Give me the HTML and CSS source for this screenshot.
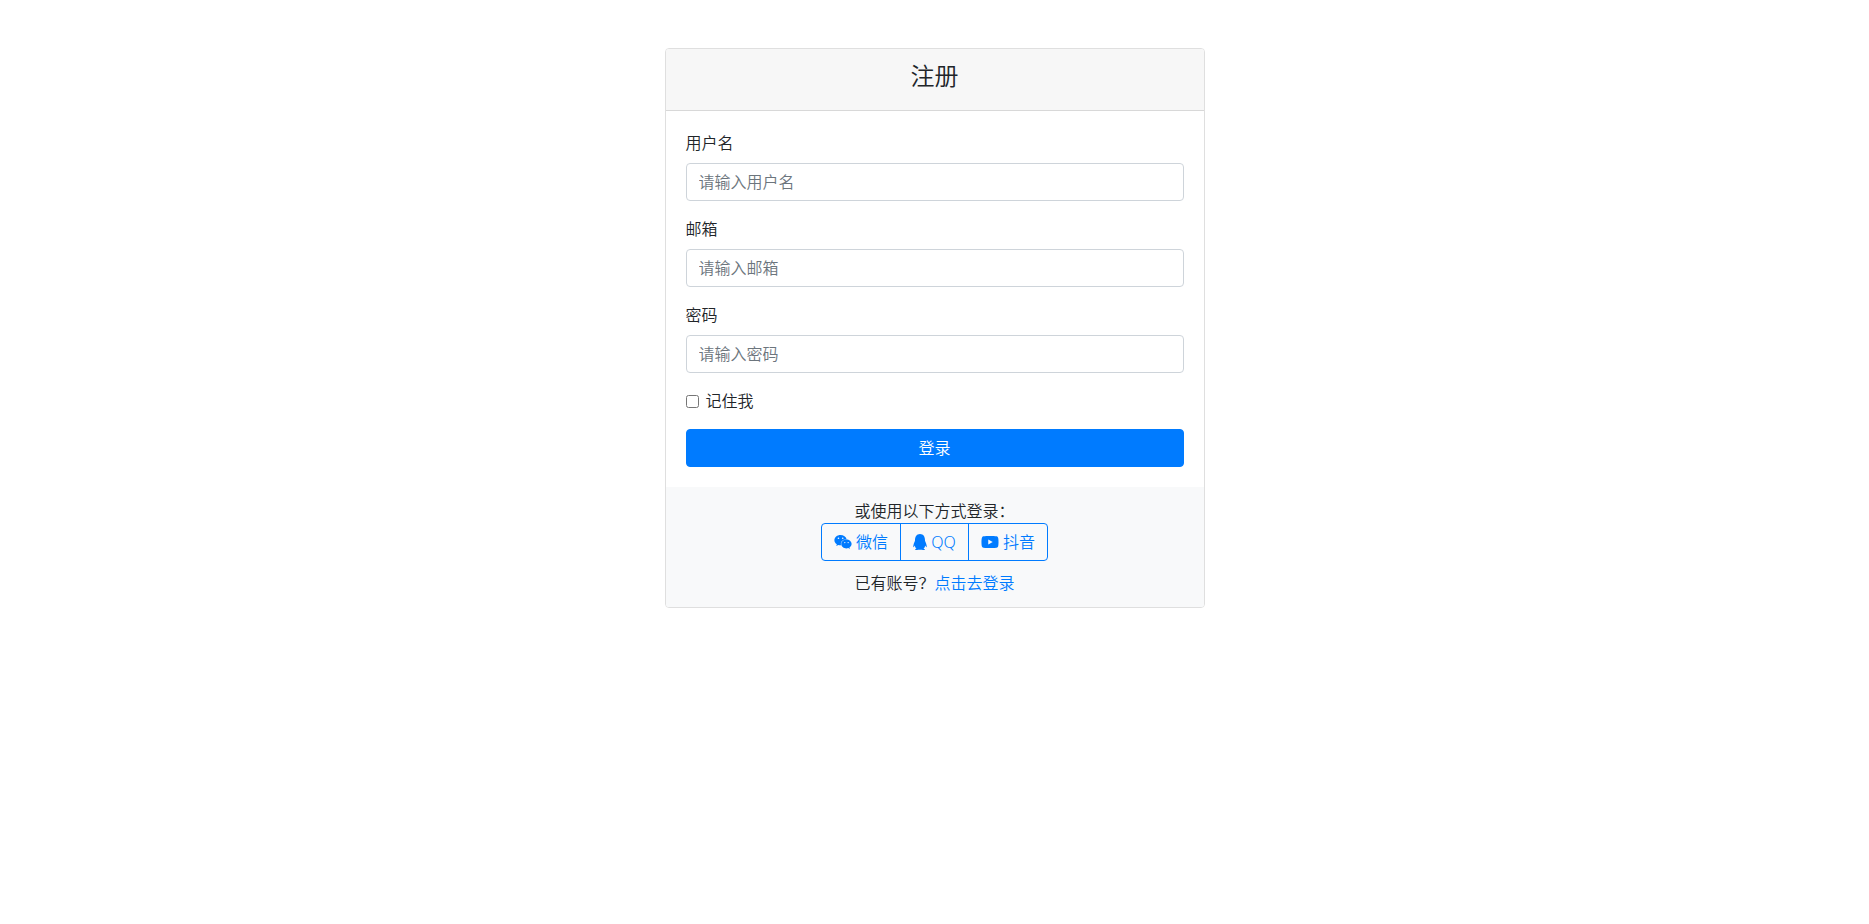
FILE: index.html
```html
<!DOCTYPE html>
<html lang="zh-CN">
<head>
    <meta charset="UTF-8">
    <meta name="viewport" content="width=device-width, initial-scale=1.0">
    <title>注册</title>
    <link rel="stylesheet" href="styles.css">
</head>
<body>
    <div class="container">
        <div class="card">
            <div class="card-header">
                <h4>注册</h4>
            </div>
            <div class="card-body">
                <form>
                    <div class="form-group">
                        <label for="username">用户名</label>
                        <input type="text" class="form-control" id="username" placeholder="请输入用户名">
                    </div>
                    <div class="form-group">
                        <label for="email">邮箱</label>
                        <input type="email" class="form-control" id="email" placeholder="请输入邮箱">
                    </div>
                    <div class="form-group">
                        <label for="password">密码</label>
                        <input type="password" class="form-control" id="password" placeholder="请输入密码">
                    </div>
                    <div class="form-check">
                        <input type="checkbox" id="remember">
                        <label for="remember">记住我</label>
                    </div>
                    <button type="submit" class="btn btn-primary">登录</button>
                </form>
            </div>
            <div class="card-footer">
                <div>或使用以下方式登录：</div>
                <div class="btn-group">
                    <button type="button" class="btn btn-outline">
                        <svg class="icon" viewBox="0 0 576 512" width="18" height="16"><path d="M385.2 167.6c6.4 0 12.6.3 18.8 1.1C387.4 90.3 303.3 32 207.7 32 100.5 32 13 104.8 13 197.4c0 53.4 29.3 97.5 77.9 131.6l-19.3 58.6 68-34.1c24.4 4.8 43.8 9.7 68.2 9.7 6.2 0 12.1-.3 18.3-.8-4-12.9-6.2-26.6-6.2-40.8-.1-84.9 72.9-154 165.3-154zm-104.5-52.9c14.5 0 24.2 9.7 24.2 24.4 0 14.5-9.7 24.2-24.2 24.2-14.8 0-29.3-9.7-29.3-24.2.1-14.7 14.6-24.4 29.3-24.4zm-136.4 48.6c-14.5 0-29.3-9.7-29.3-24.2 0-14.8 14.8-24.4 29.3-24.4 14.8 0 24.4 9.7 24.4 24.4 0 14.6-9.6 24.2-24.4 24.2zM563 319.4c0-77.9-77.9-141.3-165.4-141.3-92.7 0-165.4 63.4-165.4 141.3S305 460.7 397.6 460.7c19.3 0 38.9-5.1 58.6-9.9l53.4 29.3-14.8-48.6C534 402.1 563 363.2 563 319.4zm-219.1-24.5c-9.7 0-19.3-9.7-19.3-19.6 0-9.7 9.7-19.3 19.3-19.3 14.8 0 24.4 9.7 24.4 19.3 0 10-9.7 19.6-24.4 19.6zm107.1 0c-9.7 0-19.3-9.7-19.3-19.6 0-9.7 9.7-19.3 19.3-19.3 14.5 0 24.4 9.7 24.4 19.3.1 10-9.9 19.6-24.4 19.6z"/></svg>
                        微信
                    </button>
                    <button type="button" class="btn btn-outline">
                        <svg class="icon" viewBox="0 0 448 512" width="14" height="16"><path d="M433.754 420.445c-11.526 1.393-44.86-52.741-44.86-52.741 0 31.345-16.136 72.247-51.051 101.786 16.842 5.192 54.843 19.167 45.803 34.421-7.316 12.343-125.51 7.881-159.632 4.037-34.122 3.844-152.316 8.306-159.632-4.037-9.045-15.25 28.918-29.214 45.783-34.415-34.92-29.539-51.059-70.445-51.059-101.792 0 0-33.334 54.134-44.859 52.741-5.37-.65-12.424-29.644 9.347-99.704 10.261-33.024 21.995-60.478 40.144-105.779C60.683 98.063 108.982.006 224 0c113.737.006 163.156 96.133 160.264 214.963 18.118 45.223 29.912 72.85 40.144 105.778 21.768 70.06 14.716 99.053 9.346 99.704z"/></svg>
                        QQ
                    </button>
                    <button type="button" class="btn btn-outline">
                        <svg class="icon" viewBox="0 0 576 512" width="18" height="16"><path d="M549.655 124.083c-6.281-23.65-24.787-42.276-48.284-48.597C458.781 64 288 64 288 64S117.22 64 74.629 75.486c-23.497 6.322-42.003 24.947-48.284 48.597-11.412 42.867-11.412 132.305-11.412 132.305s0 89.438 11.412 132.305c6.281 23.65 24.787 41.5 48.284 47.821C117.22 448 288 448 288 448s170.78 0 213.371-11.486c23.497-6.321 42.003-24.171 48.284-47.821 11.412-42.867 11.412-132.305 11.412-132.305s0-89.438-11.412-132.305zm-317.51 213.508V175.185l142.739 81.205-142.739 81.201z"/></svg>
                        抖音
                    </button>
                </div>
                <div class="login-link">已有账号？<a href="#">点击去登录</a></div>
            </div>
        </div>
    </div>
</body>
</html>
```
FILE: styles.css
```css
* {
    box-sizing: border-box;
}

body {
    margin: 0;
    font-family: "Noto Sans", "Noto Sans CJK SC", sans-serif;
    font-size: 16px;
    font-weight: 350;
    line-height: 24px;
    color: #212529;
    background-color: #fff;
}

.container {
    max-width: 540px;
    margin: 48px auto 0;
}

.card {
    border: 1px solid #dfdfdf;
    border-radius: 4px;
    overflow: hidden;
}

.card-header {
    padding: 12px 20px;
    background-color: #f7f7f7;
    border-bottom: 1px solid #d8d8d8;
    text-align: center;
}

h4 {
    margin: 0 0 8px;
    font-size: 24px;
    font-weight: 350;
    line-height: 29px;
}

.card-body {
    padding: 20px;
}

.form-group {
    margin-bottom: 16px;
}

.form-group label {
    display: block;
    margin-bottom: 8px;
}

.form-control {
    display: block;
    width: 100%;
    height: 38px;
    padding: 6px 12px;
    font: inherit;
    color: #495057;
    background-color: #fff;
    border: 1px solid #ced4da;
    border-radius: 4px;
}

.form-control::placeholder {
    color: #6c757d;
}

.form-check {
    display: flex;
    align-items: center;
    gap: 7px;
    margin-bottom: 16px;
}

.form-check input {
    width: 13px;
    height: 13px;
    margin: 0;
}

.btn {
    padding: 6px 12px;
    font: inherit;
    border: 1px solid #007bff;
    border-radius: 4px;
    cursor: pointer;
}

.btn-primary {
    display: block;
    width: 100%;
    color: #fff;
    background-color: #007bff;
}

.btn-outline {
    color: #007bff;
    background-color: transparent;
}

.btn-outline:hover {
    color: #fff;
    background-color: #007bff;
}

.btn-group {
    display: flex;
    justify-content: center;
}

.btn-group .btn:not(:first-child) {
    margin-left: -1px;
    border-top-left-radius: 0;
    border-bottom-left-radius: 0;
}

.btn-group .btn:not(:last-child) {
    border-top-right-radius: 0;
    border-bottom-right-radius: 0;
}

.icon {
    fill: currentColor;
    vertical-align: -2px;
}

.card-footer {
    padding: 12px 20px;
    background-color: #f8f9fa;
    text-align: center;
}

.login-link {
    margin-top: 10px;
}

a {
    color: #007bff;
    text-decoration: none;
}

a:hover {
    text-decoration: underline;
}
```
